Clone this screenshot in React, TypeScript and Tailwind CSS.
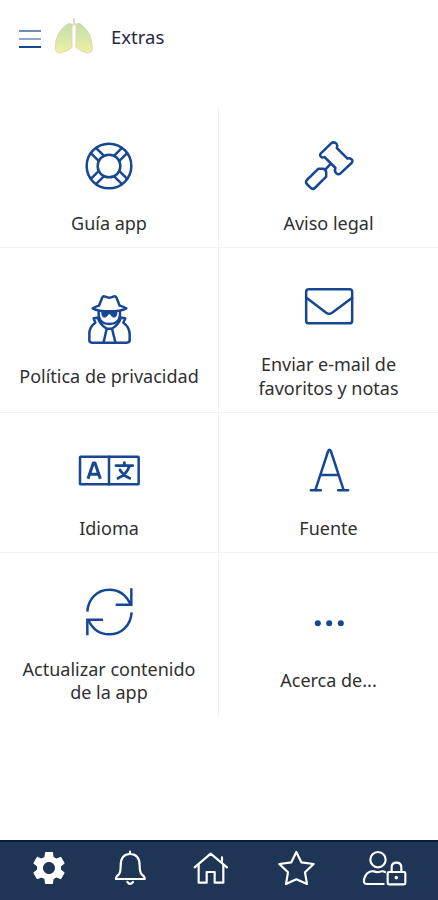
import type { ReactNode } from "react";
import { MdSettings } from "react-icons/md";

type IconProps = { viewBox: string; children: ReactNode };

function TileIcon({ viewBox, children }: IconProps) {
  return (
    <svg
      viewBox={viewBox}
      className="h-14 w-16 shrink-0"
      fill="none"
      stroke="#174793"
      strokeWidth={7.5}
      strokeLinecap="round"
      strokeLinejoin="round"
    >
      {children}
    </svg>
  );
}

function GuideIcon() {
  return (
    <TileIcon viewBox="-96 -84 192 168">
      <circle r="67" />
      <circle r="34" />
      {[45, 135, 225, 315].map((angle) => (
        <path key={angle} d="M32 -11H66M32 11H66" transform={`rotate(${angle})`} />
      ))}
    </TileIcon>
  );
}

function GavelIcon() {
  return (
    <TileIcon viewBox="49.5 24 192 168">
      <path d="M152 40 L121 70 Q117 75 121 80 Q126 84 132 81 L165 114 Q161 121 166 128 Q173 137 180 130 L213 99 Q219 93 213 88 Q207 83 201 86 L169 54 Q172 47 168 41 Q160 34 152 40 Z" />
      <path d="M135 118 L149 103" />
      <path d="M114 116 L79 150 Q74 156 79 162 L90 173 Q97 180 103 174 L137 140 V124 L129 116 Z" />
    </TileIcon>
  );
}

function SpyIcon() {
  return (
    <TileIcon viewBox="231 30 192 168">
      <path d="M297 74 L307 49 Q310 44 316 47 Q328 53 340 47 Q346 44 349 49 L359 74 Q370 77 379 82 Q362 91 328 91 Q294 91 278 82 Q287 77 297 74 Z" />
      <path d="M296 90 V103 Q300 129 328 129 Q356 129 360 103 V90" />
      <path
        d="M305 93 H351 V98 Q350 109 341 109 Q334 108 331 99 H325 Q322 108 315 109 Q306 109 305 98 Z"
        fill="#174793"
        strokeWidth="2"
      />
      <path d="M292 110 L281 112 L286 125 Q267 138 268 160 V178 Q268 185 276 185 H380 Q389 185 389 178 V160 Q389 138 370 125 L376 112 L364 110" />
      <path d="M293 110 Q300 131 320 143 L311 183 M363 110 Q356 131 336 143 L346 183 M320 143 H336" />
    </TileIcon>
  );
}

function MailIcon() {
  return (
    <TileIcon viewBox="232.5 -3 192 168">
      <rect x="260" y="28" width="138" height="102" rx="8" />
      <path d="M261 53 L320 98 Q329 105 338 98 L398 53" />
    </TileIcon>
  );
}

function LanguageIcon() {
  return (
    <TileIcon viewBox="51 9 192 168">
      <rect x="60" y="50" width="176" height="83" rx="2" />
      <path d="M147 50V133" />
      <path d="M84 116 L100 69 H105 L121 116 M90 103 H115" strokeWidth="9" strokeLinecap="butt" />
      <path d="M168 77 H218 M193 68 V77 M208 79 Q200 103 174 115 M180 90 Q190 106 209 115" strokeWidth="8.5" />
    </TileIcon>
  );
}

function FontIcon() {
  return (
    <TileIcon viewBox="49.5 9 192 168">
      <path d="M105 149 L143 33 Q147 25 151 33 L189 149 M120 105 H174 M91 151 H121 M173 151 H203" />
    </TileIcon>
  );
}

function RefreshIcon() {
  return (
    <TileIcon viewBox="231 39 192 168">
      <g strokeLinecap="butt" strokeLinejoin="miter">
        <path d="M262 122 C264 83 292 56 328 56 C358 56 379 73 391 99" />
        <path d="M394 52 V101 H347" />
        <path d="M395 124 C392 164 364 190 328 190 C299 190 277 173 265 147" />
        <path d="M262 193 V146 H309" />
      </g>
    </TileIcon>
  );
}

function DotsIcon() {
  return (
    <TileIcon viewBox="232.5 15 192 168">
      <g fill="#174793" stroke="none">
        <circle cx="295" cy="100" r="9" />
        <circle cx="329" cy="100" r="9" />
        <circle cx="364" cy="100" r="9" />
      </g>
    </TileIcon>
  );
}

function Lungs() {
  return (
    <svg viewBox="0 0 120 114" className="h-[38px] w-10">
      <defs>
        <linearGradient id="lung" x1="0" y1="0" x2="0" y2="1">
          <stop offset="0" stopColor="#c0dfaa" />
          <stop offset="1" stopColor="#eff0a5" />
        </linearGradient>
      </defs>
      <path d="M60 4V20L46 32M62 20L74 32" stroke="#dedfc6" strokeWidth="6" fill="none" />
      <g fill="url(#lung)" stroke="#e5d3b4" strokeWidth="3">
        <path d="M43 20 Q54 16 54 28 V91 Q46 101 22 107 Q3 110 4 94 Q3 44 43 20Z" />
        <path d="M78 20 Q66 16 66 28 V91 Q76 101 98 107 Q116 110 115 92 Q114 44 78 20Z" />
      </g>
    </svg>
  );
}

type NavIconProps = { viewBox: string; className: string; children: ReactNode };

function NavIcon({ viewBox, className, children }: NavIconProps) {
  return (
    <svg
      viewBox={viewBox}
      className={className}
      fill="none"
      stroke="currentColor"
      strokeWidth={6.5}
      strokeLinecap="round"
      strokeLinejoin="round"
    >
      {children}
    </svg>
  );
}

const TILES = [
  { icon: <GuideIcon />, lines: ["Guía app"] },
  { icon: <GavelIcon />, lines: ["Aviso legal"] },
  { icon: <SpyIcon />, lines: ["Política de privacidad"] },
  { icon: <MailIcon />, lines: ["Enviar e-mail de", "favoritos y notas"] },
  { icon: <LanguageIcon />, lines: ["Idioma"] },
  { icon: <FontIcon />, lines: ["Fuente"] },
  { icon: <RefreshIcon />, lines: ["Actualizar contenido", "de la app"] },
  { icon: <DotsIcon />, lines: ["Acerca de..."] },
];

export default function App() {
  return (
    <div className="flex h-[900px] w-[438px] flex-col bg-white font-['Noto_Sans','Open_Sans',sans-serif] text-[#303030]">
      <header className="flex h-[108px] items-start pt-[17px] pl-[19px]">
        <button className="mt-[13px] flex w-[22px] flex-col gap-[6px]" aria-label="Menú">
          <span className="h-[2px] w-full bg-[#6f8bb8]" />
          <span className="h-[2px] w-full bg-[#94a6c8]" />
          <span className="h-[2px] w-full bg-[#174793]" />
        </button>
        <div className="ml-[13px]">
          <Lungs />
        </div>
        <h1 className="mt-[7px] ml-[17px] text-[18.5px] leading-[26px] text-[#26263f]">Extras</h1>
      </header>

      <main className="grid grid-cols-2 grid-rows-[140px_165px_140px_163px]">
        {TILES.map(({ icon, lines }, i) => (
          <div
            key={lines[0]}
            className={`flex flex-col items-center justify-center border-[#f1f1f1] pt-[30px] pb-[11px] ${
              i % 2 === 0 ? "border-r" : ""
            } ${i < 6 ? "border-b" : ""}`}
          >
            {icon}
            <p className="mt-[18px] text-center text-[18px] leading-[23.5px] whitespace-nowrap">
              {lines.map((line) => (
                <span key={line} className="block">
                  {line}
                </span>
              ))}
            </p>
          </div>
        ))}
      </main>

      <nav className="mt-auto flex h-[60px] items-center justify-between border-t-2 border-[#0b1c44] bg-[#1f3556] pr-[30px] pb-1.5 pl-8 text-white">
        <MdSettings className="-mx-[3px] size-10" />
        <NavIcon viewBox="340 60 99 108" className="h-9 w-[33px]">
          <path d="M388 65 V71 M346 147 Q345 141 354 134 Q360 127 360 107 Q360 72 388 72 Q417 72 417 107 Q417 127 424 134 Q433 141 432 147 Z" />
          <path d="M380 156 Q388 167 397 156" />
        </NavIcon>
        <NavIcon viewBox="579 60 108 108" className="mr-px -ml-px size-9">
          <path d="M584 112 L632 71 L681 112 M596 103 V158 H620 V126 H644 V158 H670 V103 M666 99 V82" />
        </NavIcon>
        <NavIcon viewBox="178 60 111 108" className="h-9 w-[37px]">
          <path d="M233 66 L248 97 L285 102 L259 127 L265 162 L233 148 L202 162 L208 127 L182 102 L218 97 Z" />
        </NavIcon>
        <NavIcon viewBox="429 60 138 108" className="h-9 w-[46px]">
          <circle cx="477" cy="89" r="23" />
          <path d="M498 126 Q491 122 483 125 Q474 128 464 124 Q449 122 440 136 Q433 147 435 157 Q437 162 444 162 H494" />
          <rect x="506" y="126" width="53" height="37" rx="4" />
          <path d="M518 126 V112 Q518 98 532 98 Q547 98 547 112 V126" />
          <circle cx="532" cy="143" r="4" fill="currentColor" strokeWidth="3" />
        </NavIcon>
      </nav>
    </div>
  );
}
